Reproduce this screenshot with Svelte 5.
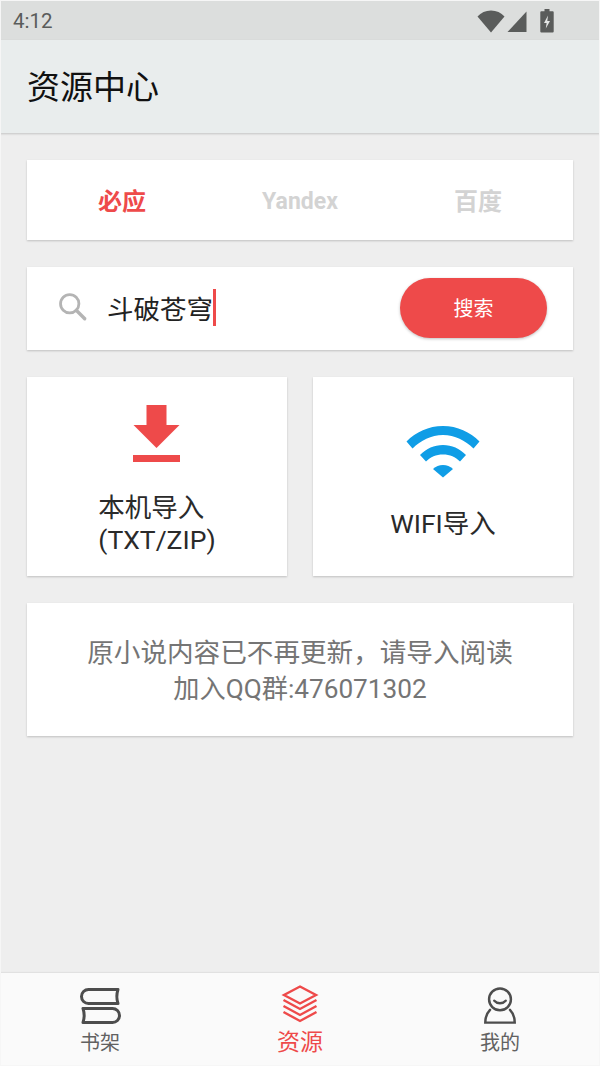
<script>
  let query = '斗破苍穹';
  const engines = ['必应', 'Yandex', '百度'];
  let active = 0;
</script>

<div class="screen">
  <div class="status">
    <span class="time">4:12</span>
    <div class="status-icons">
      <svg width="28" height="24" viewBox="0 0 28 24"><path d="M.5 7.500C4 3.500 8.500 1.500 14 1.500s10 2 13.500 6L14 23.500z" fill="#5a5c5b" /></svg>
      <svg width="20" height="24" viewBox="0 0 20 24"><path d="M19.500 2.500V23H.5z" fill="#5a5c5b" /></svg>
      <svg class="battery" width="14" height="24" viewBox="0 0 14 24">
        <path d="M4.500 0h5v2.200h3.200a1 1 0 0 1 1 1V22.500a1 1 0 0 1-1 1H1.300a1 1 0 0 1-1-1V3.200a1 1 0 0 1 1-1h3.200z" fill="#5a5c5b" />
        <path d="M8 6.500 4 14h2.600L5.800 19.500 10 12H7.300z" fill="#e4e6e5" />
      </svg>
    </div>
  </div>

  <header class="appbar">资源中心</header>

  <main class="content">
    <nav class="card tabs">
      {#each engines as name, i}
        <button class="tab" class:on={i === active} class:latin={name === 'Yandex'} onclick={() => (active = i)}>{name}</button>
      {/each}
    </nav>

    <div class="card search">
      <svg class="search-icon" width="30" height="30" viewBox="0 0 32 32" fill="none" stroke="#b4b4b4">
        <circle cx="12.500" cy="12.500" r="9.800" stroke-width="3" />
        <path d="M19.500 19.500 28.500 28.500" stroke-width="3.600" stroke-linecap="round" />
      </svg>
      <div class="field">
        <span>{query}</span><i class="caret"></i>
      </div>
      <button class="go">搜索</button>
    </div>

    <div class="imports">
      <div class="card import">
        <svg width="48" height="58" viewBox="0 0 48 58">
          <path d="M13.500 0h20v20H46.500L23.500 43 .5 20h13z" fill="#ee4a4a" />
          <rect x="0" y="50" width="47" height="7" fill="#ee4a4a" />
        </svg>
        <div class="import-label">本机导入<br />(TXT/ZIP)</div>
      </div>
      <div class="card import wifi-card">
        <svg width="74" height="54" viewBox="0 0 74 54">
          <path d="M.5 16.500C10 7 22.500 1 37 1s27 6 36.500 15.500l-6 7C59 15.500 49 10 37 10S15 15.500 6.500 23.500z" fill="#0f9de6" />
          <path d="M14 30C20.500 23.500 28 20 37 20s16.500 3.500 23 10l-6 6.500C49.500 32 44 29.500 37 29.500S24.500 32 20 36.500z" fill="#0f9de6" />
          <path d="M27 44c3-2.500 6-4 10-4s7 1.500 10 4L37 52.500z" fill="#0f9de6" />
        </svg>
        <div class="import-label">WIFI导入</div>
      </div>
    </div>

    <div class="card notice">
      <span>原小说内容已不再更新，请导入阅读</span>
      <span class="qq">加入QQ群:476071302</span>
    </div>
  </main>

  <footer class="bottom">
    <div class="item">
      <svg width="42" height="38" viewBox="0 0 42 38" fill="none" stroke="#4d4d4d" stroke-width="3" stroke-linejoin="round" stroke-linecap="round">
        <path d="M39 2.500H9.500a7 7 0 0 0 0 14H39c-1.500-4.500-1.500-9.500 0-14z" />
        <path d="M4 21.500h29.500a7 7 0 0 1 0 14H4c1.500-4.500 1.500-9.500 0-14z" />
      </svg>
      <span>书架</span>
    </div>
    <div class="item on">
      <svg width="38" height="38" viewBox="0 0 38 38" fill="none" stroke="#ee4a4a" stroke-width="2.400">
        <path d="M19 1.500 35 10 19 18.500 3 10z" />
        <path d="M2.500 15 19 24 35.500 15" />
        <path d="M2.500 21 19 30 35.500 21" />
        <path d="M2.500 27 19 36 35.500 27" />
      </svg>
      <span>资源</span>
    </div>
    <div class="item">
      <svg width="34" height="40" viewBox="0 0 34 40" fill="none" stroke="#4d4d4d" stroke-width="2.600" stroke-linecap="round">
        <circle cx="17" cy="13" r="11.500" />
        <path d="M11 14.500c3 3.500 9 3.500 12 0" />
        <path d="M6.500 24C3.500 27 1.500 31 1.500 37.500h31C32.500 31 30.500 27 27.500 24" />
      </svg>
      <span>我的</span>
    </div>
  </footer>
</div>

<style>
  :global(body) {
    background: #eeeeee;
  }
  .screen {
    display: flex;
    flex-direction: column;
    width: 600px;
    height: 1066px;
    overflow: hidden;
    background: #eeeeee;
    font-family: Roboto, 'Noto Sans CJK SC', sans-serif;
    outline: 1px solid #f6f6f6;
    outline-offset: -1px;
  }
  .status {
    display: flex;
    align-items: center;
    justify-content: space-between;
    height: 40px;
    padding: 2px 46px 0 13px;
    background: #dcdedd;
    color: #5a5c5b;
    box-sizing: border-box;
  }
  .time {
    font-size: 20.500px;
  }
  .status-icons {
    display: flex;
    align-items: center;
    gap: 2px;
  }
  .battery {
    margin-left: 11px;
  }
  .appbar {
    height: 93px;
    line-height: 95px;
    padding-left: 27px;
    font-size: 33px;
    color: #111;
    background: #e9eded;
    box-shadow: 0 1px 2px rgba(0, 0, 0, 0.18);
  }
  .content {
    flex: 1;
    display: flex;
    flex-direction: column;
    gap: 27px;
    padding: 27px 27px 0;
  }
  .card {
    background: #fff;
    box-shadow: 0 1px 2px rgba(0, 0, 0, 0.2);
  }
  .tabs {
    display: grid;
    grid-template-columns: repeat(3, 1fr);
    height: 80px;
    padding: 0 6px;
  }
  .tab {
    border: 0;
    background: none;
    padding: 0 0 2px;
    font: inherit;
    font-size: 24px;
    font-weight: 700;
    color: #d3d3d3;
  }
  .tab.latin {
    padding: 2px 0 0;
    font-size: 23px;
  }
  .tab.on {
    color: #ee4a4a;
  }
  .search {
    display: flex;
    align-items: center;
    height: 83px;
    padding: 0 26px 0 31px;
  }
  .search-icon {
    flex: none;
    margin-bottom: 3px;
  }
  .field {
    flex: 1;
    display: flex;
    align-items: center;
    margin: 0 0 2px 19px;
    font-size: 26.500px;
    color: #222;
  }
  .caret {
    width: 3px;
    height: 37px;
    background: #ee4a4a;
  }
  .go {
    width: 147px;
    height: 60px;
    margin-bottom: 2px;
    border: 0;
    border-radius: 30px;
    background: #ee4a4a;
    color: #fff;
    font: inherit;
    font-size: 20px;
    box-shadow: 0 1px 3px rgba(0, 0, 0, 0.25);
  }
  .imports {
    display: grid;
    grid-template-columns: 260px 260px;
    gap: 26px;
  }
  .import {
    display: flex;
    flex-direction: column;
    align-items: center;
    height: 199px;
    padding-top: 28px;
    box-sizing: border-box;
  }
  .wifi-card {
    padding-top: 48px;
  }
  .import-label {
    margin-top: 29px;
    font-size: 26.500px;
    line-height: 32px;
    color: #2a2a2a;
  }
  .notice {
    height: 133px;
    padding-top: 3px;
    box-sizing: border-box;
    display: flex;
    flex-direction: column;
    justify-content: center;
    align-items: center;
    font-size: 26.600px;
    line-height: 36px;
    color: #757575;
  }
  .qq {
    font-size: 26.200px;
  }
  .bottom {
    display: grid;
    grid-template-columns: repeat(3, 200px);
    height: 93px;
    background: #fafafa;
    box-shadow: 0 -1px 1px rgba(0, 0, 0, 0.05);
  }
  .item {
    display: flex;
    flex-direction: column;
    align-items: center;
    padding-top: 14px;
    font-size: 20px;
    line-height: 26px;
    color: #616161;
  }
  .item svg {
    height: 38px;
  }
  .item span {
    margin-top: 5px;
  }
  .item.on svg {
    margin-top: -2px;
    margin-bottom: 2px;
  }
  .item.on {
    color: #ee4a4a;
    font-size: 23px;
  }
</style>
